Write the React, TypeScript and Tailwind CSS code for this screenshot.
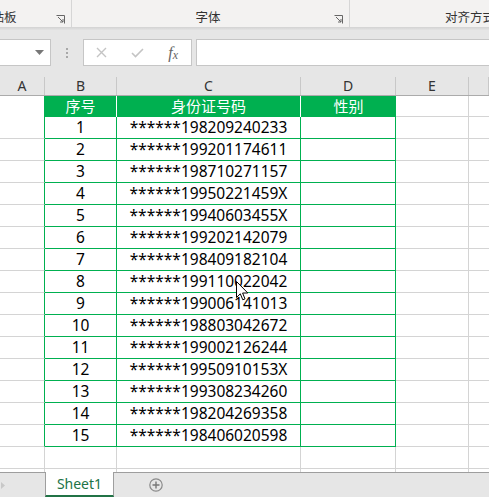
import React from 'react';

const ids = [
  '198209240233',
  '199201174611',
  '198710271157',
  '19950221459X',
  '19940603455X',
  '199202142079',
  '198409182104',
  '199110022042',
  '199006141013',
  '198803042672',
  '199002126244',
  '19950910153X',
  '199308234260',
  '198204269358',
  '198406020598',
];

const font = { fontFamily: '"Noto Sans", "Noto Sans CJK SC", sans-serif' };

function Launcher() {
  return (
    <svg width="9" height="9" viewBox="0 0 9 9" className="text-[#666]">
      <path d="M0.5 0.5 H8.5 V8.5" fill="none" stroke="currentColor" strokeWidth="1" />
      <path d="M2 2 L7 7 M4 7 H7 V4" fill="none" stroke="currentColor" strokeWidth="1" />
    </svg>
  );
}

function Cursor() {
  return (
    <svg width="13" height="21" viewBox="0 0 13 21" className="absolute left-[236px] top-[281px]">
      <path
        d="M0.5 0.5 L0.5 16.5 L4.3 12.8 L6.8 18.8 L9 17.9 L6.6 12 L11.8 12 Z"
        fill="#fff"
        stroke="#000"
        strokeWidth="1"
        strokeLinejoin="round"
      />
    </svg>
  );
}

export default function App() {
  return (
    <div className="relative w-[489px] h-[497px] overflow-hidden bg-white text-black" style={font}>
      {/* ribbon group labels */}
      <div className="flex h-[27px] bg-[#f3f2f1] text-[12.5px] text-[#333]">
        <div className="flex w-[72px] shrink-0 items-end justify-between overflow-hidden border-r border-[#d6d6d6] pb-[3px] pr-[6px]">
          <span className="-ml-[21px] whitespace-nowrap leading-none">剪贴板</span>
          <Launcher />
        </div>
        <div className="flex w-[278px] shrink-0 items-end border-r border-[#d6d6d6] pb-[3px] pr-[6px]">
          <span className="flex-1 pl-[10px] text-center leading-none">字体</span>
          <Launcher />
        </div>
        <div className="flex flex-1 items-end overflow-hidden pb-[3px] pl-[95px]">
          <span className="whitespace-nowrap leading-none">对齐方式</span>
        </div>
      </div>
      <div className="h-[3px] bg-gradient-to-b from-[#d2d2d2] to-[#e3e3e3]" />

      {/* formula bar */}
      <div className="flex h-[47px] items-start bg-[#e6e6e6] pt-[9px]">
        <div className="flex h-[27px] w-[51px] shrink-0 items-center justify-end border border-l-0 border-[#c6c6c6] bg-white pr-[6px]">
          <svg width="9" height="5" viewBox="0 0 9 5">
            <path d="M0 0 H9 L4.5 5 Z" fill="#777" />
          </svg>
        </div>
        <div className="flex h-[27px] w-[32px] shrink-0 flex-col items-center justify-center gap-[2px]">
          <span className="h-[2px] w-[2px] bg-[#a8a8a8]" />
          <span className="h-[2px] w-[2px] bg-[#a8a8a8]" />
          <span className="h-[2px] w-[2px] bg-[#a8a8a8]" />
        </div>
        <div className="flex h-[27px] w-[109px] shrink-0 items-center border border-[#c6c6c6] bg-white">
          <span className="flex w-[36px] justify-center">
            <svg width="11" height="11" viewBox="0 0 11 11">
              <path d="M1 1 L10 10 M10 1 L1 10" stroke="#c4c4c4" strokeWidth="1.4" />
            </svg>
          </span>
          <span className="flex w-[36px] justify-center">
            <svg width="13" height="10" viewBox="0 0 13 10">
              <path d="M1 5 L4.5 8.5 L12 1" fill="none" stroke="#c4c4c4" strokeWidth="1.6" />
            </svg>
          </span>
          <span
            className="flex w-[36px] items-center justify-center italic leading-none text-[#666]"
            style={{ fontFamily: '"Liberation Serif", serif' }}
          >
            <span className="text-[16px]">f</span>
            <span className="mt-[4px] text-[12px]">x</span>
          </span>
        </div>
        <div className="ml-[4px] h-[27px] flex-1 border border-r-0 border-[#c6c6c6] bg-white" />
      </div>

      {/* column headers */}
      <div className="grid h-[19px] grid-cols-[45px_72px_184px_95px_73px_1fr] border-b border-[#ababab] bg-[#e6e6e6] text-[14px] leading-[18px] text-[#333]">
        {['A', 'B', 'C', 'D', 'E', ''].map((c, i) => (
          <div key={i} className="border-r border-[#c8c8c8] text-center">
            {c}
          </div>
        ))}
      </div>

      {/* green header row */}
      <div className="grid h-[21px] grid-cols-[45px_72px_184px_95px_73px_1fr] text-[15px] leading-[21px]">
        <div className="border-r border-[#00b050]" />
        <div className="border-r border-white bg-[#00b050] text-center text-white">序号</div>
        <div className="border-r border-white bg-[#00b050] text-center text-white">身份证号码</div>
        <div className="bg-[#00b050] text-center text-white">性别</div>
        <div className="border-b border-r border-[#d4d4d4]" />
        <div className="border-b border-[#d4d4d4]" />
      </div>

      {/* data rows */}
      {ids.map((id, i) => (
        <div
          key={id}
          className="grid h-[22px] grid-cols-[45px_72px_184px_95px_73px_1fr] text-[15.5px] leading-[21px]"
        >
          <div className="border-b border-r border-[#d4d4d4] border-r-[#00b050]" />
          <div className="border-b border-r border-[#00b050] text-center">{i + 1}</div>
          <div className="border-b border-r border-[#00b050] text-center">******{id}</div>
          <div className="border-b border-r border-[#00b050]" />
          <div className="border-b border-r border-[#d4d4d4]" />
          <div className="border-b border-[#d4d4d4]" />
        </div>
      ))}

      {/* empty rows */}
      <div className="grid h-[22px] grid-cols-[45px_72px_184px_95px_73px_1fr]">
        <div className="border-b border-r border-[#d4d4d4]" />
        <div className="border-b border-r border-[#d4d4d4]" />
        <div className="border-b border-r border-[#d4d4d4]" />
        <div className="border-b border-r border-[#d4d4d4]" />
        <div className="border-b border-r border-[#d4d4d4]" />
        <div className="border-b border-[#d4d4d4]" />
      </div>
      <div className="grid h-[3px] grid-cols-[45px_72px_184px_95px_73px_1fr]">
        <div className="border-r border-[#d4d4d4]" />
        <div className="border-r border-[#d4d4d4]" />
        <div className="border-r border-[#d4d4d4]" />
        <div className="border-r border-[#d4d4d4]" />
        <div className="border-r border-[#d4d4d4]" />
        <div />
      </div>

      {/* sheet tabs */}
      <div className="flex h-[25px] items-stretch border-t border-[#9e9e9e] bg-[#e6e6e6]">
        <div className="flex w-[45px] shrink-0 items-center pl-[1px]">
          <svg width="4" height="7" viewBox="0 0 4 7">
            <path d="M0 0 L4 3.5 L0 7 Z" fill="#c8c8c8" />
          </svg>
        </div>
        <div className="-mt-px flex w-[69px] shrink-0 items-center justify-center border-x border-b-2 border-[#9e9e9e] border-b-[#217346] bg-white text-[14px] text-[#217346]">
          Sheet1
        </div>
        <div className="flex w-[83px] shrink-0 items-center justify-center">
          <svg width="14" height="14" viewBox="0 0 14 14">
            <circle cx="7" cy="7" r="6.2" fill="none" stroke="#8a8a8a" strokeWidth="1.2" />
            <path d="M7 3.5 V10.5 M3.5 7 H10.5" stroke="#777" strokeWidth="1.4" />
          </svg>
        </div>
      </div>

      <Cursor />
    </div>
  );
}
